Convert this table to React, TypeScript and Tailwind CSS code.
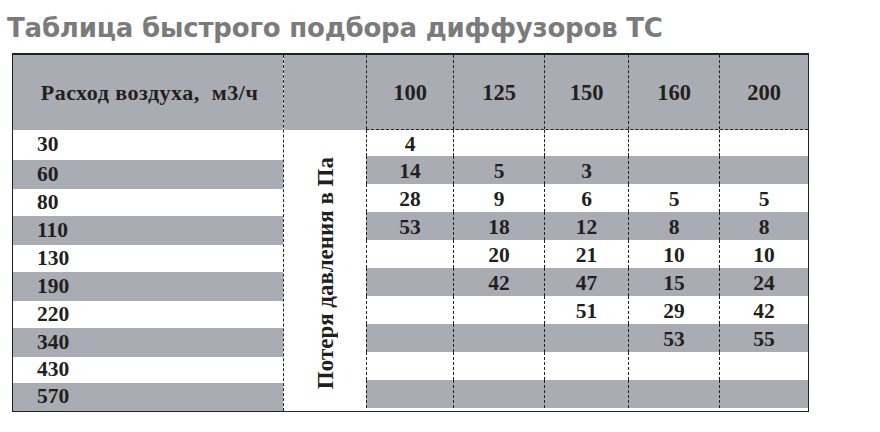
const flows = ["30", "60", "80", "110", "130", "190", "220", "340", "430", "570"];
const leftHeights = [30, 29, 27, 29, 27, 29, 27, 29, 26, 28];
const valHeights = [26, 28, 28, 28, 28, 28, 28, 28, 28, 28];
const sizes = ["100", "125", "150", "160", "200"];
const widths = [87, 91, 84, 91, 89];
const values: string[][] = [
  ["4", "", "", "", ""],
  ["14", "5", "3", "", ""],
  ["28", "9", "6", "5", "5"],
  ["53", "18", "12", "8", "8"],
  ["", "20", "21", "10", "10"],
  ["", "42", "47", "15", "24"],
  ["", "", "51", "29", "42"],
  ["", "", "", "53", "55"],
  ["", "", "", "", ""],
  ["", "", "", "", ""],
];

export default function App() {
  return (
    <div className="w-[880px] h-[432px] bg-white overflow-hidden">
      <div className="pl-[7px] pt-[15px] text-[26px] leading-none font-bold text-[#7b7b7b] font-['DejaVu_Sans',sans-serif] tracking-[-0.2px]">
        Таблица быстрого подбора диффузоров ТС
      </div>
      <div className="ml-[12px] mt-[12px] w-[797px] border border-t-2 border-[#222] flex font-['Liberation_Serif','Times_New_Roman',serif] font-bold text-[#231f20]">
        {/* Column 1 */}
        <div className="w-[270px] flex flex-col">
          <div className="h-[75px] bg-[#a9acb3] flex items-center justify-center text-[22px] tracking-[0.5px] whitespace-pre pl-[3px]">
            Расход воздуха,  м3/ч
          </div>
          {flows.map((f, i) => (
            <div
              key={f}
              style={{ height: leftHeights[i] }}
              className={`flex items-center pl-[24px] text-[21.5px] leading-none ${i % 2 === 1 ? "bg-[#a9acb3]" : "bg-white"}`}
            >
              {f}
            </div>
          ))}
        </div>
        {/* Column 2 */}
        <div className="w-[83px] flex flex-col border-l border-dashed border-[#222]">
          <div className="h-[75px] bg-[#a9acb3]" />
          <div className="flex-1 bg-white flex items-center justify-center pt-[6px]">
            <span className="[writing-mode:vertical-rl] rotate-180 text-[23px] leading-none whitespace-nowrap">
              Потеря давления в Па
            </span>
          </div>
        </div>
        {/* Value columns */}
        <div className="flex flex-col">
          <div className="flex h-[75px] bg-[#a9acb3] border-b border-dashed border-[#222]">
            {sizes.map((s, j) => (
              <div
                key={s}
                style={{ width: widths[j] }}
                className="flex items-center justify-center border-l border-dashed border-[#222] text-[22.5px] pt-[2px]"
              >
                {s}
              </div>
            ))}
          </div>
          {values.map((row, i) => (
            <div key={i} className="flex" style={{ height: valHeights[i] }}>
              {row.map((v, j) => (
                <div
                  key={j}
                  style={{ width: widths[j] }}
                  className={`flex items-center justify-center border-l border-dashed border-[#222] text-[21.5px] leading-none pt-[3px] ${i % 2 === 1 ? "bg-[#a9acb3]" : "bg-white"}`}
                >
                  {v}
                </div>
              ))}
            </div>
          ))}
        </div>
      </div>
    </div>
  );
}
